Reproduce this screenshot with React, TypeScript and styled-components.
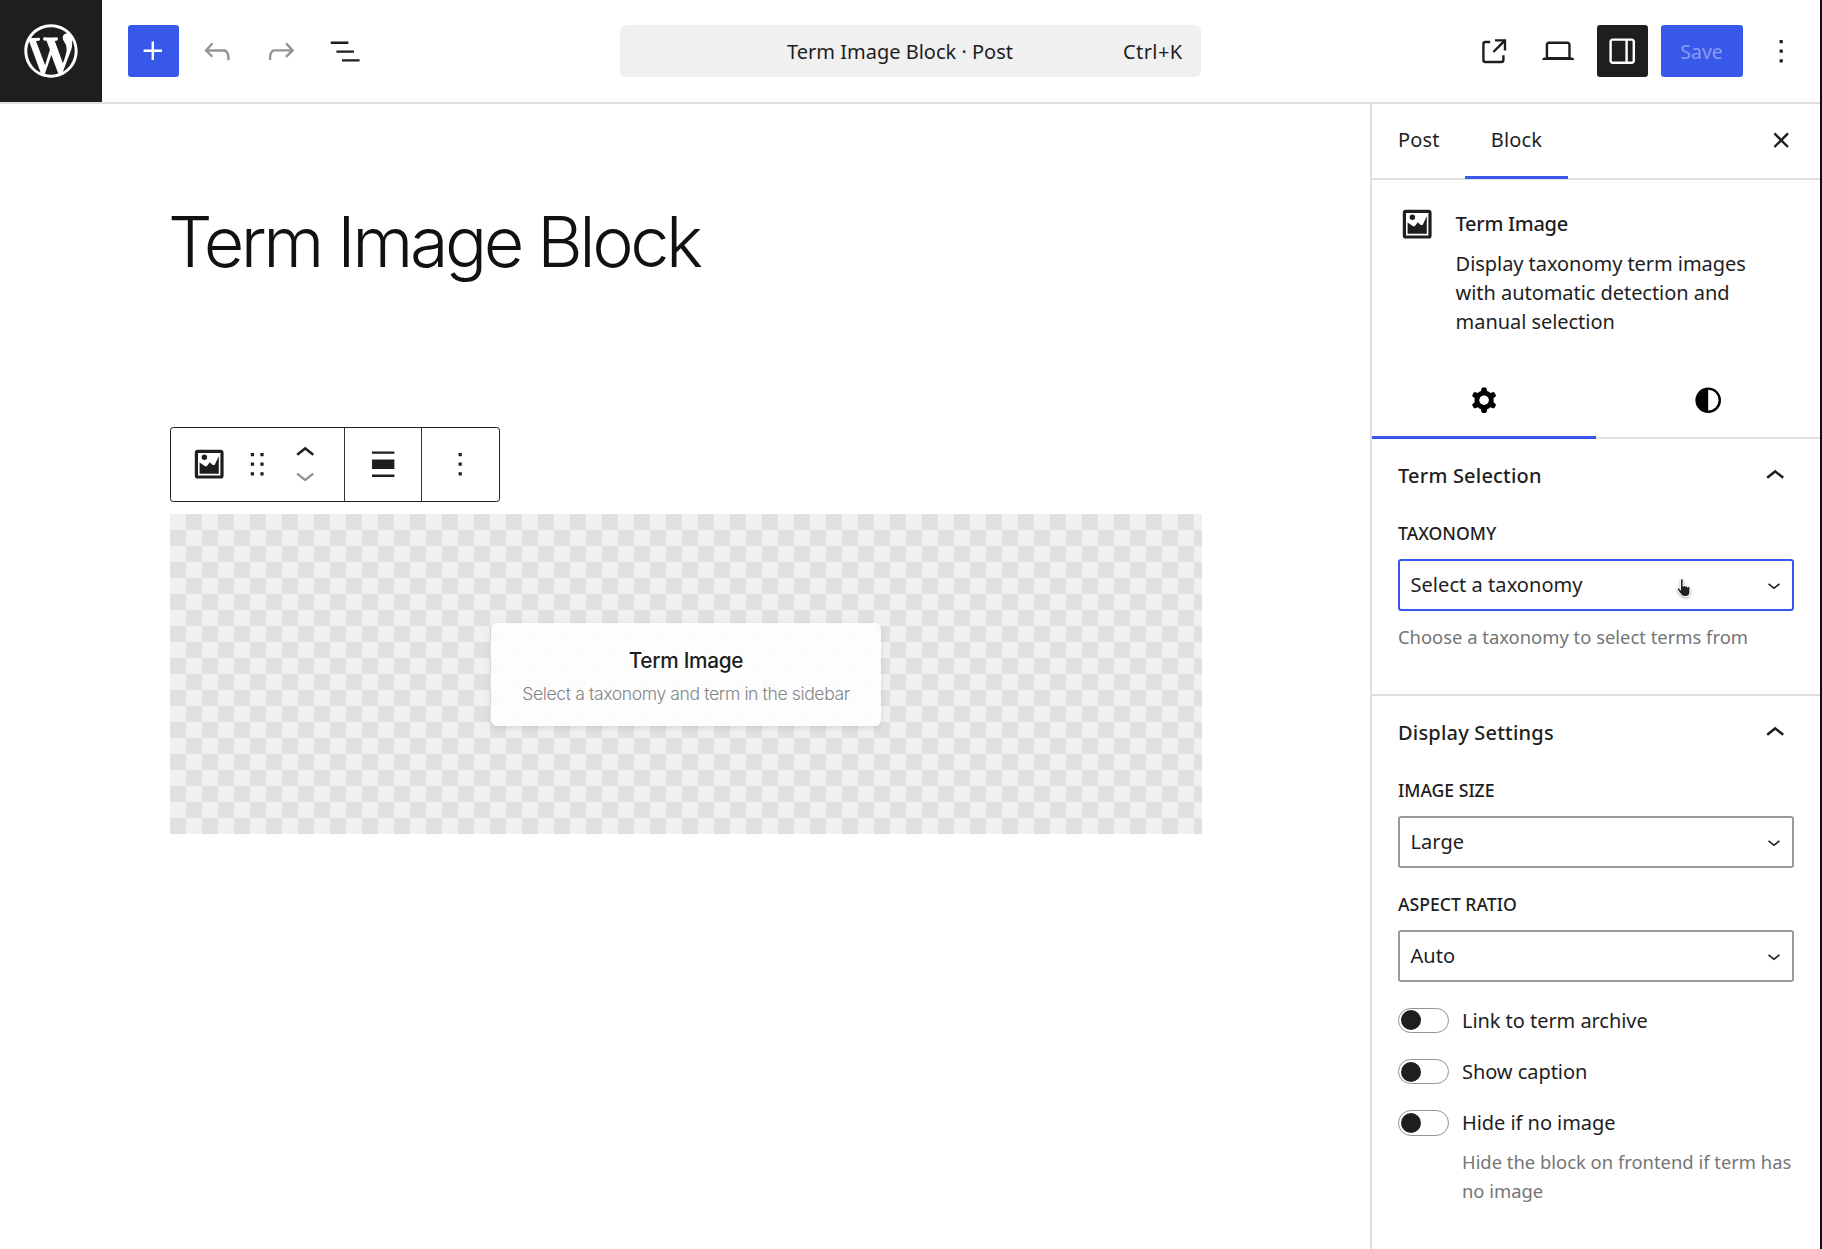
import styled, { createGlobalStyle } from 'styled-components'

const UI_FONT = `'Noto Sans', 'Open Sans', sans-serif`
const HEADING_FONT = `Inter, 'Liberation Sans', sans-serif`

const GlobalStyle = createGlobalStyle`
  html, body {
    margin: 0;
    height: 100%;
    overflow: hidden;
    background: #111;
  }
  #root { height: 100%; }
  * { box-sizing: border-box; }
`

const ICONS = {
  wordpress:
    'M20 10c0-5.51-4.49-10-10-10C4.48 0 0 4.49 0 10c0 5.52 4.48 10 10 10 5.51 0 10-4.48 10-10zM7.78 15.37L4.37 6.22c.55-.02 1.17-.08 1.17-.08.5-.06.44-1.13-.06-1.11 0 0-1.45.11-2.37.11-.18 0-.37 0-.58-.01C4.12 2.69 6.87 1.11 10 1.11c2.33 0 4.45.87 6.05 2.34-.68-.11-1.65.39-1.65 1.58 0 .74.45 1.36.9 2.1.35.61.55 1.36.55 2.46 0 1.49-1.4 5-1.4 5l-3.03-8.37c.54-.02.82-.17.82-.17.5-.05.44-1.25-.06-1.22 0 0-1.44.12-2.38.12-.87 0-2.33-.12-2.33-.12-.5-.03-.56 1.2-.06 1.22l.92.08 1.26 3.41zM17.41 10c.24-.64.74-1.87.43-4.25.7 1.29 1.05 2.71 1.05 4.25 0 3.29-1.73 6.24-4.4 7.78.97-2.59 1.94-5.2 2.92-7.78zM6.1 18.09C3.12 16.65 1.11 13.53 1.11 10c0-1.3.23-2.48.72-3.59C3.25 10.3 4.67 14.2 6.1 18.09zm4.03-6.63l2.58 6.98c-.86.29-1.76.45-2.71.45-.79 0-1.57-.11-2.29-.33.81-2.38 1.62-4.74 2.42-7.1z',
  plus: 'M11 12.5V17.5H12.5V12.5H17.5V11H12.5V6H11V11H6V12.5H11Z',
  undo: 'M18.3 11.7c-.6-.6-1.4-.9-2.3-.9H6.7l2.9-3.3-1.1-1-4.5 5L8.5 16l1-1-2.7-2.7H16c.5 0 .9.2 1.3.5 1 1 1 3.4 1 4.5v.3h1.5v-.2c0-1.5 0-4.3-1.5-5.7z',
  redo: 'M15.6 6.5l-1.1 1 2.9 3.3H8c-.9 0-1.7.3-2.3.9-1.4 1.5-1.4 4.2-1.4 5.6v.2h1.5v-.3c0-1.1 0-3.5 1-4.5.3-.3.7-.5 1.3-.5h9.2L14.5 15l1.1 1.1 4.6-4.6-4.6-5z',
  listView: 'M3 6h11v1.5H3V6Zm3.5 5.5h11V13h-11v-1.5ZM21 17H10v1.5h11V17Z',
  external:
    'M19.5 4.5h-7V6h4.44l-5.97 5.97 1.06 1.06L18 7.06v4.44h1.5v-7Zm-13 1a2 2 0 0 0-2 2v10a2 2 0 0 0 2 2h10a2 2 0 0 0 2-2v-3H17v3a.5.5 0 0 1-.5.5h-10a.5.5 0 0 1-.5-.5v-10a.5.5 0 0 1 .5-.5h3V5.5h-3Z',
  laptop:
    'M20.5 16h-.7V8c0-1.1-.9-2-2-2H6.2c-1.1 0-2 .9-2 2v8h-.7c-.8 0-1.5.7-1.5 1.5h20c0-.8-.7-1.5-1.5-1.5zM5.7 8c0-.3.2-.5.5-.5h11.6c.3 0 .5.2.5.5v7.6H5.7V8z',
  drawerRight:
    'M18 4H6c-1.1 0-2 .9-2 2v12c0 1.1.9 2 2 2h12c1.1 0 2-.9 2-2V6c0-1.1-.9-2-2-2zm-4 14.5H6c-.3 0-.5-.2-.5-.5V6c0-.3.2-.5.5-.5h8v13zm4.5-.5c0 .3-.2.5-.5.5h-2.5v-13H18c.3 0 .5.2.5.5v12z',
  more: 'M13 19h-2v-2h2v2zm0-6h-2v-2h2v2zm0-6h-2V5h2v2z',
  close:
    'M12 13.06l3.712 3.713 1.061-1.06L13.061 12l3.712-3.712-1.06-1.06L12 10.938 8.288 7.227l-1.061 1.06L10.939 12l-3.712 3.712 1.06 1.061L12 13.061z',
  chevronUp: 'M6.5 12.4L12 8l5.5 4.4-.9 1.2L12 10l-4.5 3.6-1-1.2z',
  chevronDown: 'M17.5 11.6L12 16l-5.5-4.4.9-1.2L12 14l4.5-3.6 1 1.2z',
  drag: 'M8 7h2V5H8v2zm0 6h2v-2H8v2zm0 6h2v-2H8v2zm6-14v2h2V5h-2zm0 8h2v-2h-2v2zm0 6h2v-2h-2v2z',
  align: 'M5 5.5h14V4H5v1.5ZM5 20h14v-1.5H5V20ZM5 9h14v6H5V9Z',
  cog: 'M10.289 4.836A1 1 0 0 1 11.275 4h1.306a1 1 0 0 1 .987.836l.244 1.466c.787.26 1.503.679 2.108 1.218l1.393-.522a1 1 0 0 1 1.216.437l.653 1.13a1 1 0 0 1-.23 1.273l-1.148.944a6.025 6.025 0 0 1 0 2.435l1.149.946a1 1 0 0 1 .23 1.272l-.653 1.13a1 1 0 0 1-1.216.437l-1.394-.522c-.605.54-1.32.958-2.108 1.218l-.244 1.466a1 1 0 0 1-.987.836h-1.306a1 1 0 0 1-.986-.836l-.244-1.466a5.995 5.995 0 0 1-2.108-1.218l-1.394.522a1 1 0 0 1-1.217-.436l-.653-1.131a1 1 0 0 1 .23-1.272l1.149-.946a6.026 6.026 0 0 1 0-2.435l-1.148-.944a1 1 0 0 1-.23-1.272l.653-1.131a1 1 0 0 1 1.217-.437l1.393.522a5.994 5.994 0 0 1 2.108-1.218l.244-1.466ZM14.929 12a3 3 0 1 1-6 0 3 3 0 0 1 6 0Z',
  styles: 'M20 12a8 8 0 1 1-16 0 8 8 0 0 1 16 0Zm-1.5 0a6.5 6.5 0 0 1-6.5 6.5v-13a6.5 6.5 0 0 1 6.5 6.5Z',
  termImage:
    'M5 3h14a2 2 0 0 1 2 2v14a2 2 0 0 1-2 2H5a2 2 0 0 1-2-2V5a2 2 0 0 1 2-2Zm0 2v14h14V5H5Zm1 13v-7l3.2 2.2c.7.4 1.3.2 1.8-.5l1.3-1.9 1.7 1.5c.6.4 1.2.3 1.6-.3L18 7V18H6Zm3-8.6a1.7 1.7 0 1 1 0-3.4 1.7 1.7 0 0 1 0 3.4Z',
}

const Svg = styled.svg<{ $size?: number; $color?: string }>`
  display: block;
  flex-shrink: 0;
  width: ${(p) => p.$size ?? 38.4}px;
  height: ${(p) => p.$size ?? 38.4}px;
  fill: ${(p) => p.$color ?? 'currentColor'};
  fill-rule: evenodd;
  clip-rule: evenodd;
`

const Icon = ({ name, size, color }: { name: keyof typeof ICONS; size?: number; color?: string }) => (
  <Svg viewBox={name === 'wordpress' ? '-2 -2 24 24' : '0 0 24 24'} $size={size} $color={color}>
    <path d={ICONS[name]} />
  </Svg>
)

const App = styled.div`
  display: flex;
  flex-direction: column;
  width: 1820px;
  height: 100%;
  background: #fff;
  color: #1e1e1e;
  font-family: ${UI_FONT};
  font-size: 20px;
  position: relative;
  overflow: hidden;
`

const Header = styled.header`
  flex: none;
  display: grid;
  grid-template-columns: 1fr 581px 1fr;
  align-items: center;
  height: 103.5px;
  border-bottom: 2px solid #e0e0e0;
`

const HeaderLeft = styled.div`
  display: flex;
  align-items: center;
`

const LogoLink = styled.a`
  display: flex;
  align-items: center;
  justify-content: center;
  width: 102px;
  height: 102px;
  margin-right: 26px;
  background: #1e1e1e;
  color: #fff;
`

const Tools = styled.div<{ $right?: boolean }>`
  display: flex;
  align-items: center;
  gap: 12.8px;
  justify-content: ${(p) => (p.$right ? 'flex-end' : 'flex-start')};
  padding-right: ${(p) => (p.$right ? '13.5px' : '0')};
`

const ToolButton = styled.button<{ $variant?: 'primary' | 'dark'; $muted?: boolean; $wide?: boolean }>`
  display: flex;
  align-items: center;
  justify-content: center;
  width: ${(p) => (p.$wide ? '82px' : '51.2px')};
  height: 51.2px;
  padding: 0;
  border: 0;
  border-radius: 3.2px;
  font: inherit;
  background: ${(p) => (p.$variant === 'primary' ? '#3858e9' : p.$variant === 'dark' ? '#1e1e1e' : 'transparent')};
  color: ${(p) => (p.$variant ? '#fff' : p.$muted ? '#949494' : '#1e1e1e')};
`

const SaveLabel = styled.span`
  color: rgba(255, 255, 255, 0.42);
  font-size: 19.4px;
`

const CommandBar = styled.div`
  position: relative;
  display: flex;
  align-items: center;
  justify-content: center;
  height: 51.2px;
  padding-right: 20px;
  background: #f0f0f0;
  border-radius: 6.4px;
  font-size: 20px;
`

const Shortcut = styled.span`
  position: absolute;
  right: 18px;
  letter-spacing: 0.4px;
`

const Main = styled.div`
  flex: 1;
  display: flex;
  min-height: 0;
`

const Canvas = styled.main`
  flex: 1;
  padding: 94px 0 0 170px;
`

const PostTitle = styled.h1`
  margin: 0 0 141px -2px;
  font-family: ${HEADING_FONT};
  font-size: 70px;
  font-weight: 350;
  line-height: 88px;
  letter-spacing: -3.4px;
  color: #111;
`

const BlockToolbar = styled.div`
  display: flex;
  width: 330px;
  height: 75px;
  margin-bottom: 12px;
  border: 1px solid #1e1e1e;
  border-radius: 3.2px;
  background: #fff;
`

const ToolbarGroup = styled.div<{ $width: number; $first?: boolean }>`
  display: flex;
  align-items: center;
  justify-content: center;
  width: ${(p) => p.$width}px;
  border-left: ${(p) => (p.$first ? '0' : '1px solid #333')};
`

const ToolbarCell = styled.div`
  display: flex;
  align-items: center;
  justify-content: center;
  width: 48px;
`

const MoverStack = styled.div`
  display: flex;
  flex-direction: column;
  align-items: center;
`

const Mover = styled.div<{ $disabled?: boolean }>`
  display: flex;
  align-items: center;
  justify-content: center;
  height: 22px;
  color: ${(p) => (p.$disabled ? '#949494' : '#1e1e1e')};
`

const BlockPreview = styled.section`
  display: flex;
  align-items: center;
  justify-content: center;
  width: 1032px;
  height: 320px;
  background: conic-gradient(#e0e0e0 25%, #f0f0f0 0 50%, #e0e0e0 0 75%, #f0f0f0 0) 0 0 / 32px 32px;
`

const PlaceholderCard = styled.div`
  display: flex;
  flex-direction: column;
  align-items: center;
  justify-content: center;
  width: 390px;
  height: 103px;
  margin-top: 2px;
  padding-top: 4.5px;
  border-radius: 6.4px;
  background: rgba(255, 255, 255, 0.9);
  box-shadow: 0 2px 6px rgba(0, 0, 0, 0.1);
  font-family: ${HEADING_FONT};
`

const PlaceholderTitle = styled.div`
  font-size: 20.8px;
  font-weight: 500;
  line-height: 30px;
  letter-spacing: -0.3px;
  color: #1e1e1e;
`

const PlaceholderText = styled.div`
  margin-top: 5px;
  font-size: 17.6px;
  font-weight: 300;
  line-height: 26px;
  letter-spacing: -0.4px;
  color: #858585;
`

const Sidebar = styled.aside`
  flex: none;
  width: 449.6px;
  border-left: 2px solid #e0e0e0;
  overflow: hidden;
`

const SidebarTabs = styled.div`
  display: flex;
  align-items: center;
  height: 76.5px;
  border-bottom: 2px solid #e0e0e0;
`

const SidebarTab = styled.div<{ $active?: boolean }>`
  display: flex;
  align-items: center;
  height: 100%;
  padding: 0 25.6px 4px;
  margin-bottom: -2px;
  letter-spacing: 0.15px;
  box-shadow: ${(p) => (p.$active ? 'inset 0 -3px 0 #3858e9' : 'none')};
`

const CloseButton = styled.div`
  margin-left: auto;
  margin-right: 20px;
  padding-bottom: 2px;
`

const BlockCard = styled.div`
  display: flex;
  gap: 19.2px;
  padding: 24.6px 25.6px 25.3px;
`

const BlockCardBody = styled.div`
  flex: 1;
`

const BlockCardTitle = styled.div`
  font-weight: 500;
  line-height: 38.4px;
  margin-bottom: 6.4px;
  letter-spacing: -0.3px;
`

const BlockCardText = styled.div`
  max-width: 335px;
  line-height: 29px;
  letter-spacing: -0.05px;
`

const StyleTabs = styled.div`
  display: flex;
  height: 77px;
  border-bottom: 2px solid #e0e0e0;
`

const StyleTab = styled.div<{ $active?: boolean }>`
  flex: 1;
  display: flex;
  align-items: center;
  justify-content: center;
  margin-bottom: -2px;
  color: #000;
  box-shadow: ${(p) => (p.$active ? 'inset 0 -3px 0 #3858e9' : 'none')};
`

const Panel = styled.section<{ $last?: boolean }>`
  padding: 0 25.6px ${(p) => (p.$last ? '0' : '43px')};
  border-bottom: ${(p) => (p.$last ? '0' : '2px solid #e0e0e0')};
`

const PanelHeader = styled.div`
  display: flex;
  align-items: center;
  justify-content: space-between;
  height: 73px;
  font-weight: 500;
  letter-spacing: 0.2px;

  svg {
    margin-top: 2px;
  }
`

const Field = styled.div`
  padding-top: 8px;
  & + & {
    padding-top: 23px;
  }
`

const FieldLabel = styled.div`
  font-size: 17.6px;
  font-weight: 500;
  line-height: 26px;
  margin-bottom: 13px;
`

const SelectBox = styled.div<{ $focused?: boolean }>`
  display: flex;
  align-items: center;
  justify-content: space-between;
  width: 396px;
  height: 52px;
  padding: 0 5.5px 0 10.5px;
  border-radius: 3.2px;
  border: 2px solid ${(p) => (p.$focused ? '#3858e9' : '#999')};
  letter-spacing: 0.05px;
`

const HelpText = styled.div<{ $indent?: boolean }>`
  margin-top: 11px;
  margin-left: ${(p) => (p.$indent ? '64px' : '0')};
  font-size: 18.4px;
  line-height: 29px;
  color: #757575;
`

const ToggleList = styled.div`
  display: flex;
  flex-direction: column;
  gap: 25.6px;
  margin-top: 26px;
`

const ToggleRow = styled.div`
  display: flex;
  align-items: center;
  gap: 12.8px;
  height: 25.6px;
  letter-spacing: -0.05px;
`

const ToggleTrack = styled.span`
  display: flex;
  align-items: center;
  width: 51.2px;
  height: 25.6px;
  padding-left: 2px;
  border: 1px solid #949494;
  border-radius: 13px;
`

const ToggleKnob = styled.span`
  width: 20px;
  height: 20px;
  border-radius: 50%;
  background: #1e1e1e;
`

const HandCursor = styled.svg`
  position: absolute;
  left: 1675px;
  top: 578px;
  width: 18px;
  height: 20px;
  filter: drop-shadow(0 1px 1px rgba(0, 0, 0, 0.35));
`

const Toggle = ({ label }: { label: string }) => (
  <ToggleRow>
    <ToggleTrack>
      <ToggleKnob />
    </ToggleTrack>
    {label}
  </ToggleRow>
)

const SelectField = ({ label, value, focused }: { label: string; value: string; focused?: boolean }) => (
  <Field>
    <FieldLabel>{label}</FieldLabel>
    <SelectBox $focused={focused}>
      {value}
      <Icon name="chevronDown" size={26} />
    </SelectBox>
  </Field>
)

export default function TermImageEditor() {
  return (
    <>
      <GlobalStyle />
      <App>
        <Header>
          <HeaderLeft>
            <LogoLink>
              <Icon name="wordpress" size={64} />
            </LogoLink>
            <Tools>
              <ToolButton $variant="primary">
                <Icon name="plus" />
              </ToolButton>
              <ToolButton $muted>
                <Icon name="undo" />
              </ToolButton>
              <ToolButton $muted>
                <Icon name="redo" />
              </ToolButton>
              <ToolButton>
                <Icon name="listView" />
              </ToolButton>
            </Tools>
          </HeaderLeft>
          <CommandBar>
            Term Image Block · Post
            <Shortcut>Ctrl+K</Shortcut>
          </CommandBar>
          <Tools $right>
            <ToolButton>
              <Icon name="external" />
            </ToolButton>
            <ToolButton>
              <Icon name="laptop" />
            </ToolButton>
            <ToolButton $variant="dark">
              <Icon name="drawerRight" />
            </ToolButton>
            <ToolButton $variant="primary" $wide>
              <SaveLabel>Save</SaveLabel>
            </ToolButton>
            <ToolButton>
              <Icon name="more" />
            </ToolButton>
          </Tools>
        </Header>
        <Main>
          <Canvas>
            <PostTitle>Term Image Block</PostTitle>
            <BlockToolbar>
              <ToolbarGroup $width={173} $first>
                <ToolbarCell>
                  <Icon name="termImage" />
                </ToolbarCell>
                <ToolbarCell>
                  <Icon name="drag" />
                </ToolbarCell>
                <ToolbarCell>
                  <MoverStack>
                    <Mover>
                      <Icon name="chevronUp" />
                    </Mover>
                    <Mover $disabled>
                      <Icon name="chevronDown" />
                    </Mover>
                  </MoverStack>
                </ToolbarCell>
              </ToolbarGroup>
              <ToolbarGroup $width={77}>
                <Icon name="align" />
              </ToolbarGroup>
              <ToolbarGroup $width={78}>
                <Icon name="more" />
              </ToolbarGroup>
            </BlockToolbar>
            <BlockPreview>
              <PlaceholderCard>
                <PlaceholderTitle>Term Image</PlaceholderTitle>
                <PlaceholderText>Select a taxonomy and term in the sidebar</PlaceholderText>
              </PlaceholderCard>
            </BlockPreview>
          </Canvas>
          <Sidebar>
            <SidebarTabs>
              <SidebarTab>Post</SidebarTab>
              <SidebarTab $active>Block</SidebarTab>
              <CloseButton>
                <Icon name="close" />
              </CloseButton>
            </SidebarTabs>
            <BlockCard>
              <Icon name="termImage" />
              <BlockCardBody>
                <BlockCardTitle>Term Image</BlockCardTitle>
                <BlockCardText>
                  Display taxonomy term images with automatic detection and manual selection
                </BlockCardText>
              </BlockCardBody>
            </BlockCard>
            <StyleTabs>
              <StyleTab $active>
                <Icon name="cog" />
              </StyleTab>
              <StyleTab>
                <Icon name="styles" />
              </StyleTab>
            </StyleTabs>
            <Panel>
              <PanelHeader>
                Term Selection
                <Icon name="chevronUp" />
              </PanelHeader>
              <SelectField label="TAXONOMY" value="Select a taxonomy" focused />
              <HelpText>Choose a taxonomy to select terms from</HelpText>
            </Panel>
            <Panel $last>
              <PanelHeader>
                Display Settings
                <Icon name="chevronUp" />
              </PanelHeader>
              <SelectField label="IMAGE SIZE" value="Large" />
              <SelectField label="ASPECT RATIO" value="Auto" />
              <ToggleList>
                <Toggle label="Link to term archive" />
                <Toggle label="Show caption" />
                <Toggle label="Hide if no image" />
              </ToggleList>
              <HelpText $indent>Hide the block on frontend if term has no image</HelpText>
            </Panel>
          </Sidebar>
        </Main>
        <HandCursor viewBox="0 0 16 19">
          <path
            d="M4.6 2a1.3 1.3 0 0 1 2.6 0v5.6l.4-.1a1.2 1.2 0 0 1 2 .3 1.2 1.2 0 0 1 2 .5 1.1 1.1 0 0 1 2 .7v4.2c0 2.4-1.5 4.3-3.9 4.3H8.3c-1.5 0-2.5-.6-3.3-1.8L1.6 11a1.2 1.2 0 0 1 1.8-1.5l1.2 1.3V2z"
            fill="#222"
            stroke="#fff"
            strokeWidth="1"
          />
        </HandCursor>
      </App>
    </>
  )
}
